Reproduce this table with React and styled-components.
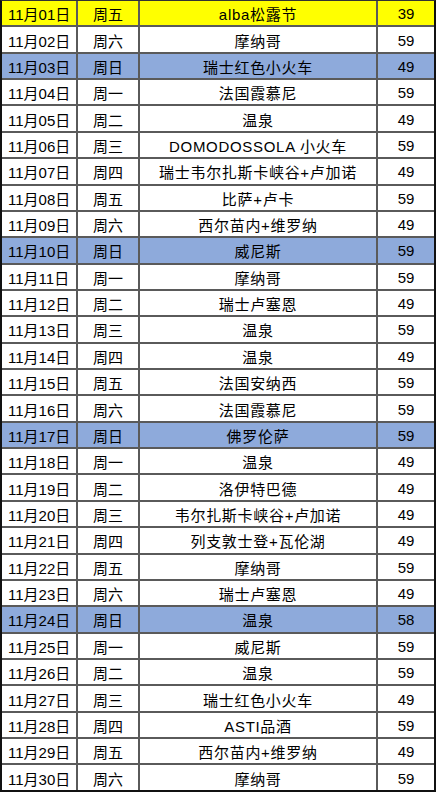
import styled, { createGlobalStyle } from "styled-components";

const rows = [
  ["11月01日", "周五", "alba松露节", 39, "yellow"],
  ["11月02日", "周六", "摩纳哥", 59],
  ["11月03日", "周日", "瑞士红色小火车", 49, "blue"],
  ["11月04日", "周一", "法国霞慕尼", 59],
  ["11月05日", "周二", "温泉", 49],
  ["11月06日", "周三", "DOMODOSSOLA 小火车", 59],
  ["11月07日", "周四", "瑞士韦尔扎斯卡峡谷+卢加诺", 49],
  ["11月08日", "周五", "比萨+卢卡", 59],
  ["11月09日", "周六", "西尔苗内+维罗纳", 49],
  ["11月10日", "周日", "威尼斯", 59, "blue"],
  ["11月11日", "周一", "摩纳哥", 59],
  ["11月12日", "周二", "瑞士卢塞恩", 49],
  ["11月13日", "周三", "温泉", 59],
  ["11月14日", "周四", "温泉", 49],
  ["11月15日", "周五", "法国安纳西", 59],
  ["11月16日", "周六", "法国霞慕尼", 59],
  ["11月17日", "周日", "佛罗伦萨", 59, "blue"],
  ["11月18日", "周一", "温泉", 49],
  ["11月19日", "周二", "洛伊特巴德", 49],
  ["11月20日", "周三", "韦尔扎斯卡峡谷+卢加诺", 49],
  ["11月21日", "周四", "列支敦士登+瓦伦湖", 49],
  ["11月22日", "周五", "摩纳哥", 59],
  ["11月23日", "周六", "瑞士卢塞恩", 49],
  ["11月24日", "周日", "温泉", 58, "blue"],
  ["11月25日", "周一", "威尼斯", 59],
  ["11月26日", "周二", "温泉", 59],
  ["11月27日", "周三", "瑞士红色小火车", 49],
  ["11月28日", "周四", "ASTI品酒", 59],
  ["11月29日", "周五", "西尔苗内+维罗纳", 49],
  ["11月30日", "周六", "摩纳哥", 59],
];

const fills = {
  yellow: "#ffff00",
  blue: "#8eaadb",
};

const App = () => {
  return (
    <>
      <GlobalStyle />
      <Table>
        {rows.map(([date, day, name, price, tone]) => (
          <Row key={date}>
            <Cell $bg={fills[tone]} $align="left">{date}</Cell>
            <Cell $bg={fills[tone]}>{day}</Cell>
            <Cell $bg={fills[tone]} $spread>{name}</Cell>
            <Cell $bg={fills[tone]}>{price}</Cell>
          </Row>
        ))}
      </Table>
    </>
  );
};

export default App;

const GlobalStyle = createGlobalStyle`
  body {
    margin: 0;
    background: #ffffff;
    font-family: "Liberation Sans", "Noto Sans CJK SC", sans-serif;
  }
`;

// 표 전체: 바깥 검은 테두리 + 격자선 색
const Table = styled.div`
  width: 436px;
  height: 792px;
  box-sizing: border-box;
  border: 2px solid #111;
  border-top: 1px solid #333;
  background: #5a5a5a;
  display: flex;
  flex-direction: column;
  gap: 2px;
`;

const Row = styled.div`
  flex: 1;
  display: grid;
  grid-template-columns: 74px 60px 236px 56px;
  gap: 2px;
`;

const Cell = styled.div`
  background: ${(p) => p.$bg || "#ffffff"};
  display: flex;
  align-items: center;
  justify-content: ${(p) => (p.$align === "left" ? "flex-start" : "center")};
  padding-left: ${(p) => (p.$align === "left" ? "6px" : "0")};
  padding-top: 1px;
  font-size: 15px;
  color: #000;
  white-space: nowrap;
  letter-spacing: ${(p) => (p.$spread ? "0.7px" : "0")};
`;
